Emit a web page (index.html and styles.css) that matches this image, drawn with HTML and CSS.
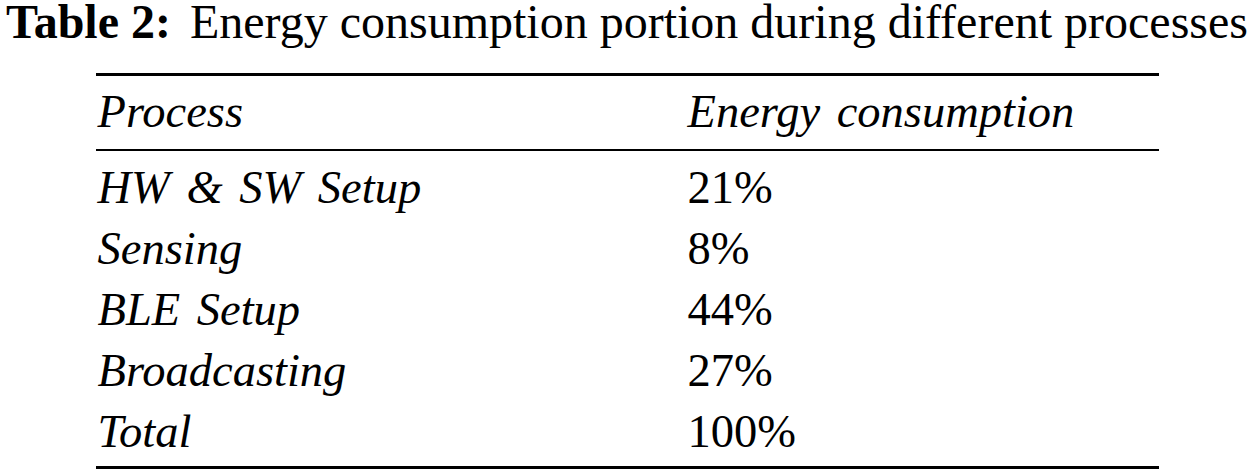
FILE: index.html
```html
<!DOCTYPE html>
<html>
<head>
<meta charset="utf-8">
<link rel="stylesheet" href="styles.css">
</head>
<body>
<div class="page">
  <div class="caption"><span class="label">Table 2:</span><span class="title">Energy consumption portion during different processes</span></div>
  <div class="table">
    <div class="row head">
      <div class="cell it">Process</div>
      <div class="cell it">Energy consumption</div>
    </div>
    <div class="body">
      <div class="row">
        <div class="cell it">HW &amp; SW Setup</div>
        <div class="cell">21%</div>
      </div>
      <div class="row">
        <div class="cell it">Sensing</div>
        <div class="cell">8%</div>
      </div>
      <div class="row">
        <div class="cell it">BLE Setup</div>
        <div class="cell">44%</div>
      </div>
      <div class="row">
        <div class="cell it">Broadcasting</div>
        <div class="cell">27%</div>
      </div>
      <div class="row">
        <div class="cell it">Total</div>
        <div class="cell">100%</div>
      </div>
    </div>
  </div>
</div>
</body>
</html>
```

FILE: styles.css
```css
html, body {
  margin: 0;
  padding: 0;
  background: #ffffff;
}

.page {
  width: 1254px;
  display: flex;
  flex-direction: column;
  align-items: center;
  font-family: "Liberation Serif", "Times New Roman", serif;
  color: #000000;
}

.caption {
  display: flex;
  font-size: 48px;
  line-height: 44px;
  white-space: nowrap;
}

.label {
  font-weight: bold;
  margin-right: 19px;
}

.table {
  margin-top: 29px;
  width: 1063px;
  border-top: 3px solid #000;
  border-bottom: 3px solid #000;
  font-size: 46.5px;
  word-spacing: 5px;
}

.row {
  display: grid;
  grid-template-columns: 590px 1fr;
  line-height: 61px;
}

.head {
  padding-top: 5px;
  padding-bottom: 7px;
  border-bottom: 2px solid #000;
}

.body {
  padding-top: 6px;
  padding-bottom: 4px;
}

.cell {
  padding-left: 2px;
  white-space: nowrap;
}

.it {
  font-style: italic;
}
```
